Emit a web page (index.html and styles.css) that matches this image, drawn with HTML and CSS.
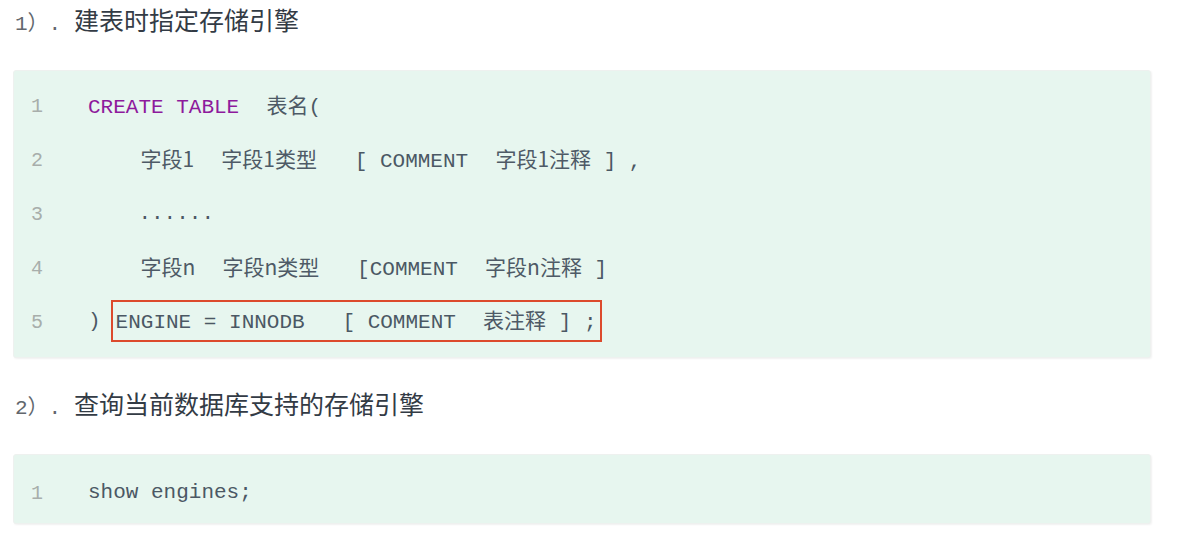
FILE: index.html
```html
<!DOCTYPE html>
<html lang="zh">
<head>
<meta charset="utf-8">
<title>存储引擎</title>
<link rel="stylesheet" href="styles.css">
</head>
<body>
<div class="page">
  <h3 class="heading"><span class="num">1）.</span>建表时指定存储引擎</h3>
  <div class="code">
    <div class="line"><span class="ln">1</span><span class="src"><span class="kw">CREATE TABLE</span>  <span class="zh">表名</span>(</span></div>
    <div class="line"><span class="ln">2</span><span class="src">    <span class="zh">字段1</span>  <span class="zh">字段1类型</span>   [ COMMENT  <span class="zh">字段1注释</span> ] ,</span></div>
    <div class="line"><span class="ln">3</span><span class="src">    ......</span></div>
    <div class="line"><span class="ln">4</span><span class="src">    <span class="zh">字段n</span>  <span class="zh">字段n类型</span>   [COMMENT  <span class="zh">字段n注释</span> ]</span></div>
    <div class="line"><span class="ln">5</span><span class="src">)<span class="hl">ENGINE = INNODB   [ COMMENT  <span class="zh">表注释</span> ] ;</span></span></div>
  </div>
  <h3 class="heading"><span class="num">2）.</span>查询当前数据库支持的存储引擎</h3>
  <div class="code code-short">
    <div class="line"><span class="ln">1</span><span class="src">show engines;</span></div>
  </div>
</div>
</body>
</html>
```
FILE: styles.css
```css
html, body {
  margin: 0;
  padding: 0;
  background: #ffffff;
}

.page {
  width: 1138px;
  padding-left: 13px;
  font-family: "Noto Sans CJK SC", "Noto Sans", sans-serif;
}

.heading {
  margin: 0 0 32px 0;
  padding-left: 2px;
  height: 38px;
  line-height: 38px;
  font-size: 25px;
  font-weight: normal;
  color: #333b45;
  white-space: pre;
}

.heading + .code {
  margin-bottom: 26px;
}

.num {
  display: inline-block;
  width: 59px;
  font-family: "Liberation Mono", "Noto Sans CJK SC", monospace;
  font-size: 21px;
  color: #62676d;
}

.code {
  background: #e7f6ef;
  border: 1px solid #eef1ef;
  border-radius: 3px;
  box-shadow: 1px 1px 2px rgba(0, 0, 0, 0.06);
  padding: 8px 0 8px 17px;
  font-family: "Liberation Mono", monospace;
  font-size: 21px;
  color: #4b5864;
}

.code-short {
  padding-top: 11px;
  padding-bottom: 3px;
}

.line {
  display: flex;
  align-items: center;
  height: 54px;
}

.ln {
  width: 57px;
  flex: none;
  color: #a8aeab;
  font-size: 20px;
}

.src {
  display: block;
  white-space: pre;
  line-height: 54px;
}

.kw {
  color: #8e1a9c;
}

.zh {
  font-family: "Noto Sans CJK SC", sans-serif;
  font-size: 21px;
  margin-left: 2px;
  color: #4e5a66;
}

.hl {
  display: inline-block;
  vertical-align: middle;
  margin-left: 10px;
  padding: 0 3px;
  border: 2px solid #dc4a2d;
  line-height: 35px;
}
```
